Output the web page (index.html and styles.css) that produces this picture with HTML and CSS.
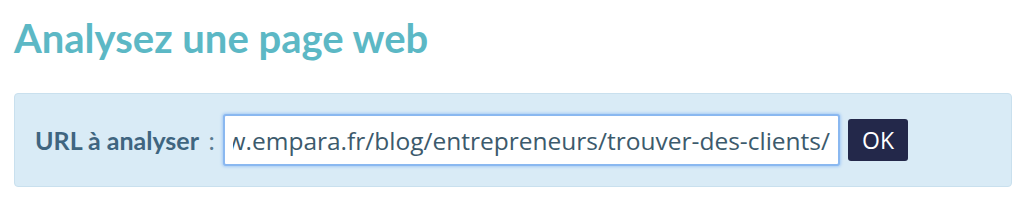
FILE: index.html
```html
<!DOCTYPE html>
<html lang="fr">
<head>
  <meta charset="UTF-8">
  <title>Analysez une page web</title>
  <link rel="stylesheet" href="styles.css">
</head>
<body>

<h1>Analysez une page web</h1>

<form class="analyse-box">
  <label class="analyse-label" for="url">URL à analyser <span class="colon">:</span></label>
  <input class="url-field" id="url" type="text" value="https://www.empara.fr/blog/entrepreneurs/trouver-des-clients/">
  <button type="button" class="ok-button">OK</button>
</form>

<script>
  const urlField = document.getElementById('url');
  urlField.scrollLeft = urlField.scrollWidth;
</script>

</body>
</html>
```

FILE: styles.css
```css
* { box-sizing: border-box; }
body {
  margin: 0;
  padding: 9px 12px 0 14px;
  background: #fff;
  font-family: "Open Sans", "Noto Sans", sans-serif;
}
h1 {
  margin: 0 0 26px 0;
  font-family: Lato, sans-serif;
  font-size: 40px;
  font-weight: 700;
  line-height: 58px;
  color: #5cb8c5;
}
.analyse-box {
  display: flex;
  align-items: center;
  height: 94px;
  padding: 0 20px;
  background: #d9ebf6;
  border: 1px solid #c9e0ee;
  border-radius: 4px;
}
.analyse-label {
  width: 188px;
  flex-shrink: 0;
  font-family: Lato, sans-serif;
  font-size: 25px;
  font-weight: 700;
  color: #3f6580;
}
.analyse-label .colon {
  font-weight: 400;
  margin-left: 4px;
  color: #5a7a90;
}
.url-field {
  width: 617px;
  height: 52px;
  padding: 0 8px;
  background: #fff;
  border: 2px solid #8ab8f0;
  box-shadow: 0 0 3px 1px #a8cdf5;
  border-radius: 3px;
  outline: none;
  font-family: "Open Sans", sans-serif;
  font-size: 24.5px;
  color: #3c5a6c;
}
.ok-button {
  margin-left: 8px;
  width: 60px;
  height: 42px;
  padding: 0;
  border: none;
  border-radius: 3px;
  background: #23284a;
  color: #fff;
  font-family: "Open Sans", sans-serif;
  font-size: 23px;
}
```
